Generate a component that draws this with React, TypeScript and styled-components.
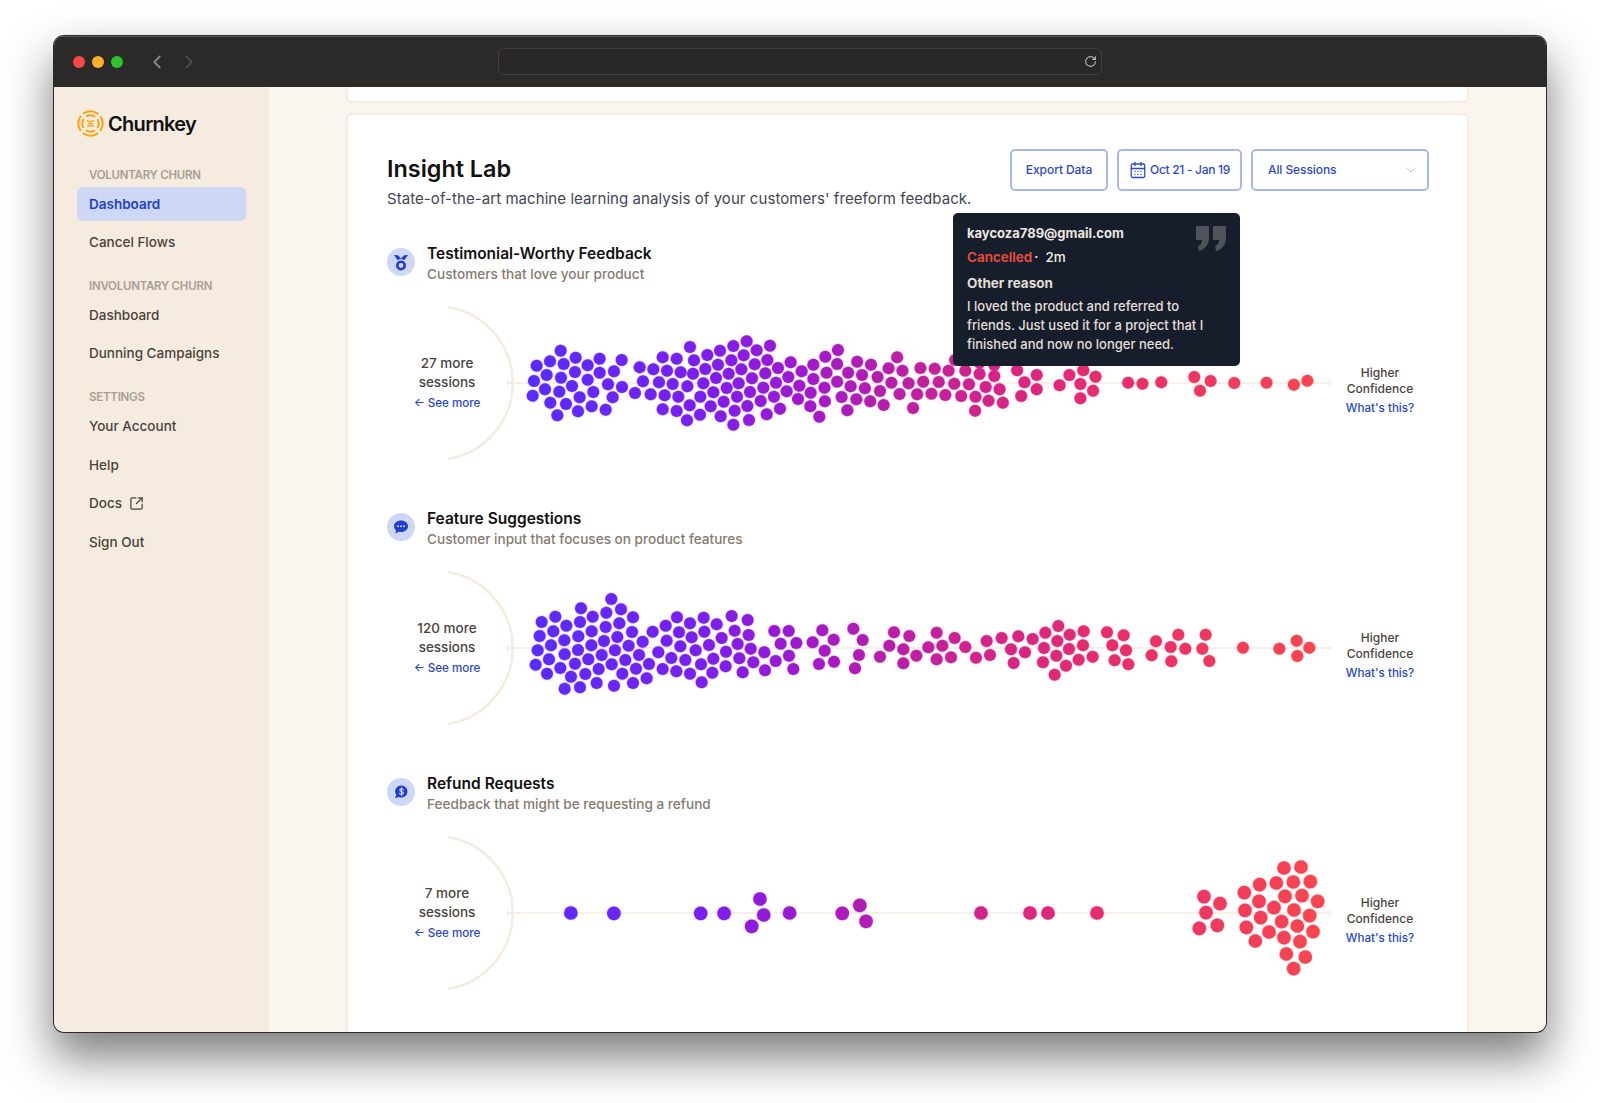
import React from 'react'
import styled, { createGlobalStyle } from 'styled-components'
import { CalendarDays, ChevronDown, ChevronLeft, ChevronRight, RotateCw, SquareArrowOutUpRight } from 'lucide-react'

type Pt = [number, number]

const AXIS_TOP = 80
const CHART_LEFT = 387

// dots are kept in the coordinates they were sampled in, one block per cluster
const sampled = (ox: number, oy: number, sx: number, sy: number, pts: Pt[]): Pt[] =>
  pts.map(([x, y]) => [ox + x / sx, oy + y / sy])

const swarmOne: Pt[] = [
  ...sampled(400, 300, 3, 3, [
    [482,152],[410,197],[450,184],[491,192],[527,173],[563,196],[599,176],[665,180],[440,225],[483,233],[525,216],[599,218],[642,214],[402,243],[563,239],[516,258],[624,253],[666,261],[398,287],[435,268],[478,275],[580,276],[539,292],[638,292],[451,308],[498,312],[575,319],[617,329],[534,334],[472,346],
    [719,202],[760,208],[801,212],[729,244],[777,247],[818,252],[705,279],[752,283],[794,286],[835,290],[788,172],[830,176],[870,141],[882,181],[842,217],[879,221],[862,259],[910,250],[922,165],[960,152],[1000,138],[1040,124],[1070,151],[1110,137],[1031,166],[994,181],[954,194],[916,207],[1102,180],[1064,193],[1024,208],[986,221],[948,234],[1134,204],[1096,220],[1056,235],[1016,250],[980,264],[940,277],[901,290],[869,316],[830,333],[788,328],[861,361],[900,344],[932,319],[971,305],[1011,290],[1050,276],[1090,263],[1128,248],[1165,231],[1172,187],[1205,214],[1240,194],[1240,237],[1198,257],[1160,274],[1232,278],[1194,297],[1122,290],[1082,303],[1042,318],[1004,332],[962,349],[1000,374],[1047,360],[1100,343],[1140,326],[1231,319],[1258,350],
  ]),
  ...sampled(800, 340, 2.45, 3, [
    [93,30],[62,50],[91,72],[140,65],[174,74],[238,52],[217,85],[251,92],[295,84],[330,86],[364,92],[405,92],[440,102],[476,108],[532,91],[580,105],[660,105],[694,91],[724,110],[65,98],[118,98],[152,105],[190,111],[224,128],[266,130],[302,125],[340,126],[378,131],[414,133],[455,141],[489,148],[550,127],[580,148],[636,136],[687,132],[718,152],[60,143],[91,125],[124,139],[159,145],[196,153],[244,162],[287,163],[322,161],[356,165],[395,168],[430,170],[462,182],[497,188],[542,168],[687,175],[102,171],[138,178],[172,184],[205,195],[61,184],[116,211],[277,204],[429,212],
    [380,60],[440,68],[476,75],
    [804,128],[839,131],[885,127],[966,111],[1006,123],[980,152],[1064,129],[1143,128],[1210,134],[1243,122],
  ]),
]

const swarmTwo: Pt[] = [
  ...sampled(520, 580, 3, 3, [
    [274,57],[183,85],[303,88],[106,110],[218,110],[259,98],[339,112],[65,126],[139,137],[180,126],[298,130],[257,141],[100,154],[59,168],[175,169],[215,154],[336,156],[398,155],[437,137],[471,112],[510,130],[551,113],[590,133],[635,108],[683,120],[477,157],[515,172],[553,155],[605,174],[644,152],[686,165],[763,153],[806,153],[907,151],[941,179],[1000,146],
    [133,181],[93,196],[53,211],[252,183],[292,171],[214,196],[174,210],[368,185],[326,197],[285,211],[245,225],[205,238],[165,251],[134,223],[87,238],[47,254],[121,264],[81,281],[153,290],[196,282],[236,267],[275,253],[316,240],[357,225],[415,217],[440,182],[481,199],[527,211],[567,195],[653,192],[692,206],[782,191],[829,189],[878,187],[733,217],[618,215],[580,236],[496,240],[454,234],[387,252],[348,266],[307,281],[339,309],[380,295],[282,317],[230,309],[180,322],[134,326],[428,267],[469,274],[510,281],[543,253],[577,278],[617,259],[658,235],[700,247],[767,243],[807,227],[914,212],[1017,225],[668,277],[735,271],[820,267],[897,252],[942,245],[1005,265],[545,307],
  ]),
  ...sampled(860, 600, 3, 3, [
    [8,120],[102,97],[148,108],[230,98],[284,114],[380,123],[425,114],[475,109],[518,117],[556,98],[595,78],[629,104],[671,94],[741,97],[791,106],[888,124],[955,104],[1037,104],
    [88,137],[130,148],[205,142],[247,137],[316,141],[453,148],[495,157],[552,144],[592,123],[627,147],[669,136],[757,136],[798,151],[932,141],[976,146],[1027,146],[1149,143],[1258,146],[1310,122],[1348,143],
    [60,170],[169,167],[230,178],[273,172],[348,173],[390,165],[461,189],[549,187],[589,167],[656,179],[698,170],[764,181],[805,193],[875,166],[934,184],[1048,183],[1312,168],[130,190],[618,197],[584,224],
  ]),
]

const swarmThree: Pt[] = [
  ...sampled(370, 760, 2.903, 3, [
    [583,459],[708,460],[960,460],[1028,460],[1132,417],[1143,465],[1108,499],[1218,459],[1371,460],[1422,436],[1440,484],
  ]),
  [981,913],[1030,913],[1048,913],[1097,913],
  ...sampled(1150, 840, 3, 3, [
    [162,170],[210,191],[168,218],[148,265],[202,256],
    [402,84],[453,81],[329,134],[379,129],[430,126],[481,125],[283,158],[405,169],[456,167],[503,184],[327,184],[285,211],[372,203],[432,210],[332,233],[479,227],[395,245],[442,258],[289,262],[357,276],[489,275],[402,293],[450,305],[316,303],[409,342],[466,351],[431,386],
  ]),
]

const STOPS: [number, number[]][] = [
  [530, [90, 43, 255]],
  [700, [122, 31, 238]],
  [800, [160, 24, 207]],
  [900, [187, 31, 166]],
  [1000, [215, 36, 135]],
  [1100, [231, 43, 109]],
  [1200, [239, 55, 96]],
  [1310, [248, 70, 80]],
]

const dotColor = (x: number) => {
  for (let i = 1; i < STOPS.length; i++) {
    if (x <= STOPS[i][0]) {
      const [x0, a] = STOPS[i - 1]
      const [x1, b] = STOPS[i]
      const t = Math.max(0, (x - x0) / (x1 - x0))
      return `rgb(${a.map((v, k) => Math.round(v + (b[k] - v) * t)).join(',')})`
    }
  }
  return 'rgb(248,70,80)'
}

const GlobalStyle = createGlobalStyle`
  html, body {
    margin: 0;
    height: 100%;
    background: #fff;
    overflow: hidden;
  }
  * { box-sizing: border-box; }
  body {
    font-family: Inter, "Noto Sans", sans-serif;
    -webkit-font-smoothing: antialiased;
  }
`

const Page = styled.div`
  padding: 36px 0 0 54px;
`

const BrowserWindow = styled.div`
  width: 1492px;
  height: 996px;
  display: flex;
  flex-direction: column;
  border-radius: 10px;
  overflow: hidden;
  box-shadow: 0 0 0 1px #2a2a2a, 0 24px 46px 2px rgba(0, 0, 0, 0.5);
`

const TitleBar = styled.div`
  height: 51px;
  flex: none;
  display: flex;
  align-items: center;
  background: #2c2a29;
  border-top: 1px solid #5a5a5a;
  padding-left: 19px;
`

const Light = styled.span<{ $color: string }>`
  width: 12px;
  height: 12px;
  border-radius: 50%;
  margin-right: 7px;
  background: ${p => p.$color};
`

const NavArrows = styled.div`
  display: flex;
  align-items: center;
  gap: 10px;
  margin-left: 16px;
`

const UrlBar = styled.div`
  width: 604px;
  height: 27px;
  margin: -2px 0 0 298px;
  display: flex;
  align-items: center;
  justify-content: flex-end;
  padding-right: 4px;
  border: 1px solid #423f3e;
  border-radius: 6px;
  background: #2a2827;
`

const Body = styled.div`
  flex: 1;
  min-height: 0;
  display: flex;
`

const Sidebar = styled.aside`
  width: 214.5px;
  flex: none;
  padding: 23px 23px 0;
  background: #f5ebdf;
`

const Brand = styled.div`
  display: flex;
  align-items: center;
  gap: 4px;
  height: 27px;
  margin-bottom: 29.5px;
  font-size: 20px;
  font-weight: 600;
  letter-spacing: -0.7px;
  color: #111;
`

const NavLabel = styled.div`
  height: 16px;
  line-height: 16px;
  margin: 0 0 4px 12px;
  font-size: 11.5px;
  font-weight: 600;
  letter-spacing: -0.25px;
  color: #a89f94;

  & ~ & {
    margin-top: 18.6px;
  }
`

const NavItem = styled.a<{ $active?: boolean }>`
  display: flex;
  align-items: center;
  gap: 7px;
  width: 169px;
  height: 34.4px;
  margin-bottom: 4px;
  padding-left: 12px;
  border-radius: 6px;
  font-size: 13.5px;
  font-weight: ${p => (p.$active ? 600 : 500)};
  color: ${p => (p.$active ? '#2040c8' : '#4a433c')};
  background: ${p => (p.$active ? '#ced7f5' : 'transparent')};
`

const Main = styled.main`
  flex: 1;
  min-width: 0;
  padding: 0 77px 0 77.5px;
  background: #faf5ee;
  overflow: hidden;
`

const CardStub = styled.div`
  height: 16px;
  margin-bottom: 10px;
  background: #fff;
  border: 2px solid #f5ebdf;
  border-top: 0;
  border-radius: 0 0 6px 6px;
`

const Card = styled.section`
  position: relative;
  height: 960px;
  padding: 34px 38px 0 39px;
  background: #fff;
  border: 2px solid #f5ebdf;
  border-radius: 6px;
`

const CardHeader = styled.header`
  display: flex;
  justify-content: space-between;
  align-items: flex-start;
  margin-bottom: 33px;
`

const Heading = styled.div`
  padding-top: 5px;
`

const Title = styled.h1`
  margin: 0;
  height: 30px;
  line-height: 30px;
  font-size: 23.4px;
  font-weight: 600;
  color: #111;
`

const Subtitle = styled.p`
  margin: 4px 0 0;
  line-height: 22px;
  font-size: 15px;
  letter-spacing: 0.065px;
  white-space: nowrap;
  color: #3f4654;
`

const Controls = styled.div`
  display: flex;
  gap: 9px;
`

const Control = styled.div<{ $width: number; $between?: boolean; $tight?: boolean }>`
  width: ${p => p.$width}px;
  height: 41.5px;
  display: flex;
  align-items: center;
  justify-content: ${p => (p.$between ? 'space-between' : 'center')};
  gap: 3px;
  padding: ${p => (p.$between ? '0 8px 0 15px' : '0 4px')};
  border: 2px solid #a9b7ef;
  border-radius: 5px;
  font-size: 12px;
  font-weight: 500;
  letter-spacing: ${p => (p.$tight ? '-0.3px' : '-0.08px')};
  color: #2b49d0;
`

const Sections = styled.div`
  display: flex;
  flex-direction: column;
  gap: 45px;
`

const SectionHead = styled.div`
  display: flex;
  align-items: center;
  gap: 12px;
  height: 42px;
  margin-bottom: 18px;
`

const IconBadge = styled.span`
  width: 28px;
  height: 28px;
  margin-bottom: 4px;
  flex: none;
  display: flex;
  align-items: center;
  justify-content: center;
  border-radius: 50%;
  background: #ced7f5;
`

const SectionTitle = styled.div`
  line-height: 20px;
  font-size: 15.5px;
  font-weight: 600;
  color: #111;
`

const SectionNote = styled.div`
  margin-top: 0;
  line-height: 20px;
  font-size: 13.6px;
  font-weight: 500;
  color: #857b70;
`

const ChartRow = styled.div`
  height: 160px;
  display: grid;
  grid-template-columns: 120px 825px 96px;
  align-items: center;
`

const Swarm = styled.svg`
  grid-column: 1 / -1;
  grid-row: 1;
  width: 1041px;
  height: 160px;
  overflow: visible;
`

const LeftNote = styled.div`
  grid-column: 1;
  grid-row: 1;
  margin-top: -1px;
  text-align: center;
  font-size: 13.5px;
  line-height: 19px;
  font-weight: 500;
  color: #4a433c;
`

const RightNote = styled.div`
  grid-column: 3;
  grid-row: 1;
  padding-top: 16px;
  text-align: center;
  font-size: 12px;
  line-height: 16px;
  font-weight: 500;
  color: #4a433c;
`

const ChartLink = styled.a`
  display: block;
  margin-top: 2px;
  line-height: 18px;
  font-size: 11.6px;
  font-weight: 500;
  color: #2745d0;
`

const Tooltip = styled.div`
  position: absolute;
  left: 605px;
  top: 98px;
  width: 287px;
  height: 153px;
  padding: 10px 14px;
  border-radius: 5px;
  background: #171e2b;
  color: #e4dfd8;
`

const TipQuote = styled.svg`
  position: absolute;
  right: 14px;
  top: 13px;
`

const TipEmail = styled.div`
  line-height: 20px;
  font-size: 13px;
  font-weight: 700;
  color: #ede7e0;
`

const TipStatus = styled.div`
  margin-top: 4px;
  line-height: 20px;
  font-size: 13.5px;
  font-weight: 500;
  color: #f2eee8;
`

const Cancelled = styled.span`
  margin-right: 2px;
  font-weight: 600;
  color: #ef4c3c;
`

const TipTime = styled.span`
  margin-left: 7px;
`

const TipReason = styled.div`
  margin-top: 6px;
  line-height: 20px;
  font-size: 13.5px;
  font-weight: 700;
`

const TipBody = styled.div`
  margin-top: 4px;
  line-height: 19.2px;
  font-size: 13px;
  font-weight: 500;
  white-space: pre-line;
`

const Logo = () => (
  <svg width="27" height="27" viewBox="0 0 27 27" fill="none" stroke="#f5a511" strokeWidth="2" strokeLinecap="round">
    <circle cx="13.5" cy="13.5" r="12.2" strokeDasharray="14.5 4.66" strokeDashoffset="7.25" />
    <circle cx="13.5" cy="13.5" r="8.2" strokeDasharray="8 4.88" strokeDashoffset="4" />
    <path d="M10.5 10.8c2 1 4 1 6 0M10.5 16.2c2-1 4-1 6 0M11.5 13.5h4" strokeWidth="1.4" />
  </svg>
)

const MedalIcon = () => (
  <svg width="16" height="17" viewBox="0 0 16 17" fill="#1f3fcc">
    <path d="M1 1l4 .2 3 3.4 3-3.4 4-.2-3.6 5.2A6 6 0 0 0 4.600 6.200z" />
    <path fillRule="evenodd" d="M8 6.500a5 5 0 1 1 0 10 5 5 0 0 1 0-10zm0 2.600a2.400 2.400 0 1 0 0 4.800 2.400 2.400 0 0 0 0-4.800z" />
  </svg>
)

const ChatIcon = () => (
  <svg width="16" height="16" viewBox="0 0 16 16">
    <path fill="#1f3fcc" d="M8 1.500c4 0 7 2.600 7 5.800s-3 5.800-7 5.800c-.8 0-1.500-.1-2.200-.3L2.300 14.500l.8-3.100C1.800 10.300 1 8.900 1 7.300c0-3.200 3-5.800 7-5.800z" />
    <circle cx="5" cy="7.300" r="1" fill="#ced7f5" />
    <circle cx="8" cy="7.300" r="1" fill="#ced7f5" />
    <circle cx="11" cy="7.300" r="1" fill="#ced7f5" />
  </svg>
)

const RefundIcon = () => (
  <svg width="16" height="16" viewBox="0 0 16 16">
    <path fill="#1f3fcc" d="M8.500 1.500a6 6 0 0 1 0 12c-.9 0-1.800-.2-2.500-.6l-4 1.300 1.200-3.400A6 6 0 0 1 8.500 1.500z" />
    <path fill="none" stroke="#ced7f5" strokeWidth="1.100" strokeLinecap="round" d="M10.300 5.700c-.4-.6-1-.8-1.800-.8-1 0-1.700.5-1.700 1.300 0 1.800 3.600.9 3.600 2.800 0 .8-.8 1.300-1.900 1.300-.8 0-1.500-.3-1.900-.9M8.500 3.900v7.300" />
  </svg>
)

type ChartProps = { dots: Pt[]; r: number; axisY: number }

const Chart = ({ dots, r, axisY }: ChartProps) => (
  <Swarm viewBox="0 0 1041 160">
    <path d="M61 4A77 77 0 0 1 61 156" fill="none" stroke="#f5ebdf" strokeWidth="2.500" />
    <path d={`M121 ${AXIS_TOP - 3}v6M121 ${AXIS_TOP}H943M943 ${AXIS_TOP - 3}v6`} fill="none" stroke="#f5ebdf" strokeWidth="1.500" />
    {dots.map(([x, y], i) => (
      <circle
        key={i}
        cx={x - CHART_LEFT}
        cy={y - axisY + AXIS_TOP}
        r={r}
        fill={dotColor(x)}
        stroke={dotColor(x)}
        strokeOpacity="0.22"
        strokeWidth="1.500"
      />
    ))}
  </Swarm>
)

const sections = [
  {
    title: 'Testimonial-Worthy Feedback',
    note: 'Customers that love your product',
    more: '27 more',
    icon: <MedalIcon />,
    dots: swarmOne,
    r: 6,
    axisY: 383,
  },
  {
    title: 'Feature Suggestions',
    note: 'Customer input that focuses on product features',
    more: '120 more',
    icon: <ChatIcon />,
    dots: swarmTwo,
    r: 6,
    axisY: 648,
  },
  {
    title: 'Refund Requests',
    note: 'Feedback that might be requesting a refund',
    more: '7 more',
    icon: <RefundIcon />,
    dots: swarmThree,
    r: 6.8,
    axisY: 913,
  },
]

export default function App() {
  return (
    <Page>
      <GlobalStyle />
      <BrowserWindow>
        <TitleBar>
          <Light $color="#fb4646" />
          <Light $color="#fdb024" />
          <Light $color="#2ac52e" />
          <NavArrows>
            <ChevronLeft size={22} color="#8a8887" strokeWidth={2} />
            <ChevronRight size={22} color="#4e4c4b" strokeWidth={2} />
          </NavArrows>
          <UrlBar>
            <RotateCw size={13} color="#b5b5b5" strokeWidth={2} />
          </UrlBar>
        </TitleBar>
        <Body>
          <Sidebar>
            <Brand>
              <Logo />
              Churnkey
            </Brand>
            <NavLabel>VOLUNTARY CHURN</NavLabel>
            <NavItem $active>Dashboard</NavItem>
            <NavItem>Cancel Flows</NavItem>
            <NavLabel>INVOLUNTARY CHURN</NavLabel>
            <NavItem>Dashboard</NavItem>
            <NavItem>Dunning Campaigns</NavItem>
            <NavLabel>SETTINGS</NavLabel>
            <NavItem>Your Account</NavItem>
            <NavItem>Help</NavItem>
            <NavItem>
              Docs
              <SquareArrowOutUpRight size={15} strokeWidth={2} />
            </NavItem>
            <NavItem>Sign Out</NavItem>
          </Sidebar>
          <Main>
            <CardStub />
            <Card>
              <CardHeader>
                <Heading>
                  <Title>Insight Lab</Title>
                  <Subtitle>State-of-the-art machine learning analysis of your customers' freeform feedback.</Subtitle>
                </Heading>
                <Controls>
                  <Control $width={98}>Export Data</Control>
                  <Control $width={125} $tight>
                    <CalendarDays size={18} strokeWidth={1.7} />
                    Oct 21 - Jan 19
                  </Control>
                  <Control $width={178} $between>
                    All Sessions
                    <ChevronDown size={16} strokeWidth={1} color="#aab2cc" />
                  </Control>
                </Controls>
              </CardHeader>
              <Sections>
                {sections.map(s => (
                  <div key={s.title}>
                    <SectionHead>
                      <IconBadge>{s.icon}</IconBadge>
                      <div>
                        <SectionTitle>{s.title}</SectionTitle>
                        <SectionNote>{s.note}</SectionNote>
                      </div>
                    </SectionHead>
                    <ChartRow>
                      <Chart dots={s.dots} r={s.r} axisY={s.axisY} />
                      <LeftNote>
                        {s.more}
                        <br />
                        sessions
                        <ChartLink>← See more</ChartLink>
                      </LeftNote>
                      <RightNote>
                        Higher
                        <br />
                        Confidence
                        <ChartLink>What's this?</ChartLink>
                      </RightNote>
                    </ChartRow>
                  </div>
                ))}
              </Sections>
              <Tooltip>
                <TipQuote width="30" height="25" viewBox="0 0 30 25" fill="#4f5258">
                  <path d="M1 0h11a1 1 0 0 1 1 1v11c0 7-5 12-10 13l-1-5c3-1 4-3 4-6H1a1 1 0 0 1-1-1V1a1 1 0 0 1 1-1z" />
                  <path d="M18 0h11a1 1 0 0 1 1 1v11c0 7-5 12-10 13l-1-5c3-1 4-3 4-6h-5a1 1 0 0 1-1-1V1a1 1 0 0 1 1-1z" />
                </TipQuote>
                <TipEmail>kaycoza789@gmail.com</TipEmail>
                <TipStatus>
                  <Cancelled>Cancelled</Cancelled>·<TipTime>2m</TipTime>
                </TipStatus>
                <TipReason>Other reason</TipReason>
                <TipBody>{'I loved the product and referred to\nfriends. Just used it for a project that I\nfinished and now no longer need.'}</TipBody>
              </Tooltip>
            </Card>
          </Main>
        </Body>
      </BrowserWindow>
    </Page>
  )
}
